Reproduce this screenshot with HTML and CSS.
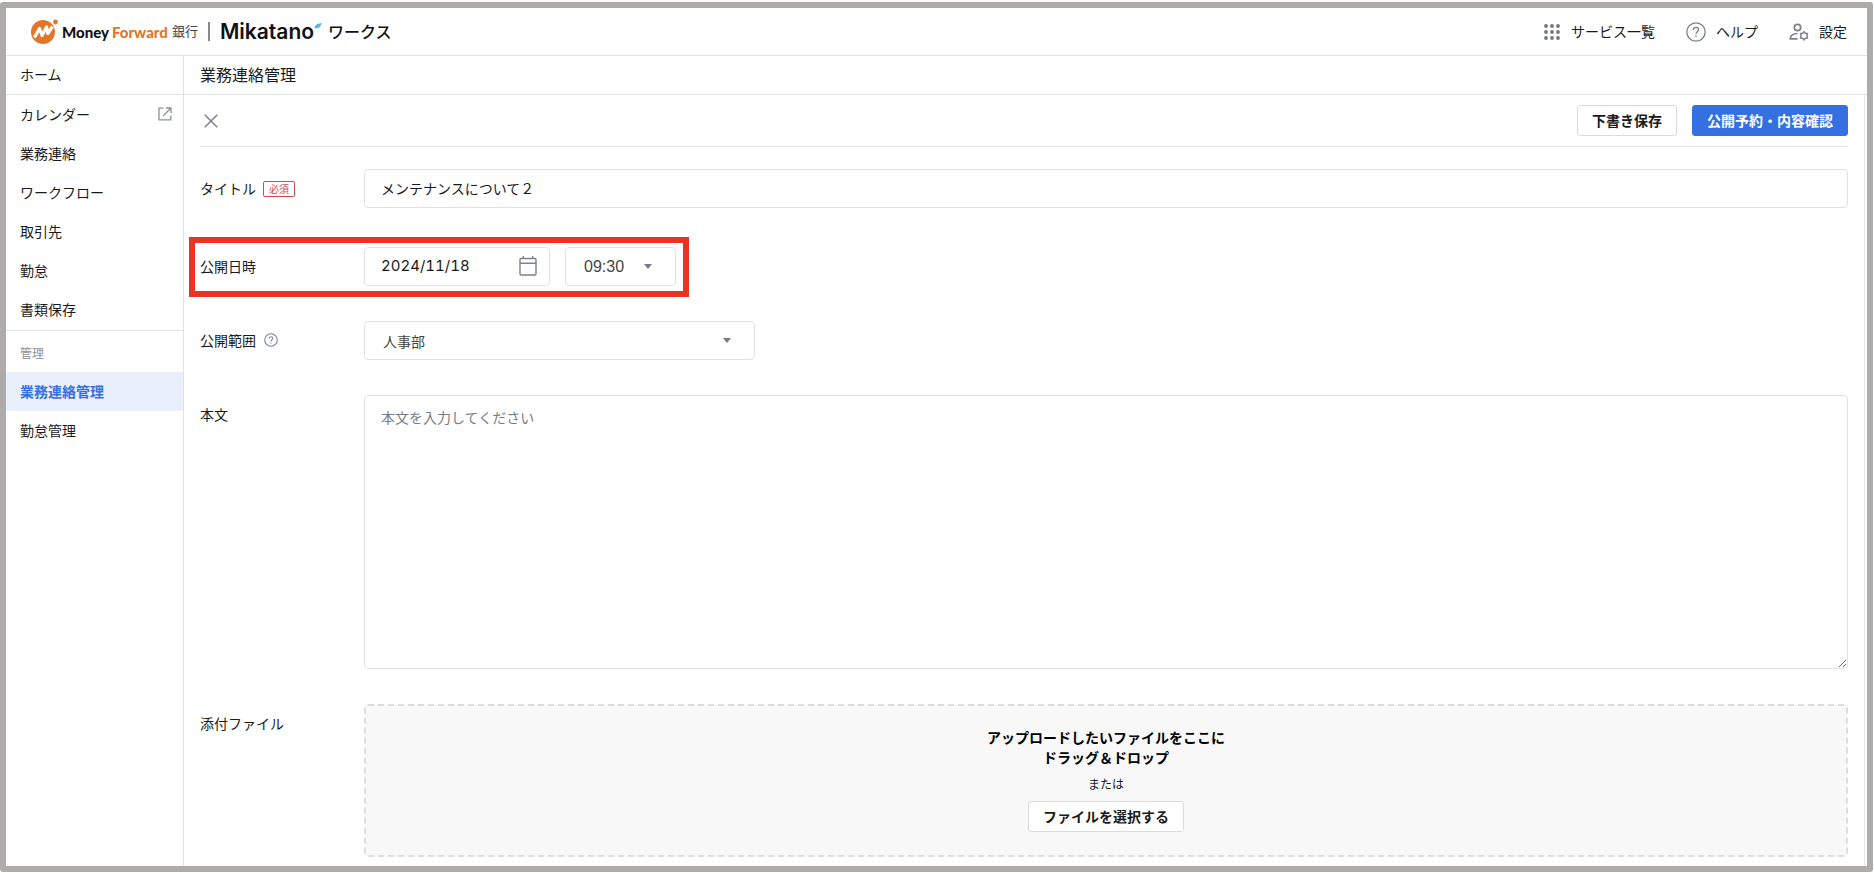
FILE: index.html
```html
<!DOCTYPE html>
<html lang="ja">

<head>
    <meta charset="UTF-8">
    <title>業務連絡管理</title>
    <link rel="stylesheet" href="styles.css">
</head>

<body>
    <div class="app">
        <header class="header">
            <a href="#" class="logo">
                <svg class="logo-mark" width="28" height="26" viewBox="0 0 28 26">
                    <circle cx="12" cy="13" r="12" fill="#e2762b" />
                    <circle cx="24.500" cy="3" r="3" fill="#fff" />
                    <circle cx="24.500" cy="3" r="2.400" fill="#e2762b" />
                    <path d="M3.500 18.500 L8.500 9.500 L11 16.500 L15.500 8 L16.800 14.500 L21.500 7.500" fill="none" stroke="#fff" stroke-width="3.200" stroke-linejoin="round" />
                </svg>
                <span class="money">Money</span>
                <span class="forward">Forward</span>
                <span class="bank">銀行</span>
                <span class="divider"></span>
                <span class="mikatano">Mikatano</span>
                <svg class="accent" width="8" height="6" viewBox="0 0 8 6">
                    <path d="M0.300 5.500 C1 2.500 3 0.300 7.800 0.300 C6.500 4 4.500 5.300 0.300 5.500Z" fill="#4db5f5" />
                </svg>
                <span class="works">ワークス</span>
            </a>
            <nav class="header-nav">
                <a href="#">
                    <svg width="18" height="18" viewBox="0 0 18 18" fill="#6f7782">
                        <circle cx="3" cy="3" r="1.900" /><circle cx="9" cy="3" r="1.900" /><circle cx="15" cy="3" r="1.900" />
                        <circle cx="3" cy="9" r="1.900" /><circle cx="9" cy="9" r="1.900" /><circle cx="15" cy="9" r="1.900" />
                        <circle cx="3" cy="15" r="1.900" /><circle cx="9" cy="15" r="1.900" /><circle cx="15" cy="15" r="1.900" />
                    </svg>
                    <span>サービス一覧</span>
                </a>
                <a href="#">
                    <svg width="20" height="20" viewBox="0 0 20 20" fill="none" stroke="#7b828e" stroke-width="1.300">
                        <circle cx="10" cy="10" r="9.200" />
                        <path d="M7.400 8 C7.400 6.200 8.500 5.400 10 5.400 C11.500 5.400 12.600 6.300 12.600 7.700 C12.600 9.500 10 9.700 10 12" />
                        <circle cx="10" cy="14.200" r="0.500" fill="#7b828e" stroke-width="0.700" />
                    </svg>
                    <span>ヘルプ</span>
                </a>
                <a href="#">
                    <svg width="20" height="18" viewBox="0 0 20 18" fill="none" stroke="#7b828e" stroke-width="1.700">
                        <circle cx="8.500" cy="4.500" r="3.200" />
                        <path d="M8.500 10.500 C4 10.500 1.300 12.500 1.300 15.800 H8.500" />
                        <path d="M15 8.800 L16.300 10.300 L18.400 10.500 L18 12.800 L18.400 15 L16.300 15.300 L15 16.900 L13.700 15.300 L11.600 15 L12 12.800 L11.600 10.500 L13.700 10.300Z" stroke-width="1.500" />
                    </svg>
                    <span>設定</span>
                </a>
            </nav>
        </header>

        <div class="content">
            <nav class="sidebar">
                <a href="#" class="home">ホーム</a>
                <a href="#">カレンダー
                    <svg width="14" height="14" viewBox="0 0 14 14" fill="none" stroke="#8b919b" stroke-width="1.300">
                        <path d="M5.500 1.200 H1 V12.800 H12.800 V8.500" />
                        <path d="M8 1 H13 V6 M13 1 L5 9" />
                    </svg>
                </a>
                <a href="#">業務連絡</a>
                <a href="#">ワークフロー</a>
                <a href="#">取引先</a>
                <a href="#">勤怠</a>
                <a href="#">書類保存</a>
                <div class="group">管理</div>
                <a href="#" class="active">業務連絡管理</a>
                <a href="#">勤怠管理</a>
            </nav>

            <main class="main">
                <h1>業務連絡管理</h1>
                <form class="panel">
                    <div class="toolbar">
                        <button type="button" class="close" aria-label="閉じる">
                            <svg width="14" height="14" viewBox="0 0 14 14" fill="none" stroke="#7b828e" stroke-width="1.500">
                                <path d="M0.700 0.700 L13.300 13.300 M13.300 0.700 L0.700 13.300" />
                            </svg>
                        </button>
                        <button type="button" class="btn">下書き保存</button>
                        <button type="button" class="btn primary">公開予約・内容確認</button>
                    </div>

                    <div class="row title-row">
                        <label for="title">タイトル<span class="required">必須</span></label>
                        <input type="text" id="title" value="メンテナンスについて２">
                    </div>

                    <div class="row date-row">
                        <label for="date">公開日時</label>
                        <div class="date">
                            <input type="text" id="date" value="2024/11/18">
                            <svg width="18" height="20" viewBox="0 0 18 20" fill="none" stroke="#7b828e" stroke-width="1.400">
                                <rect x="1" y="2.500" width="16" height="16.500" rx="1" />
                                <path d="M1 7.300 H17 M4.300 0 V2.500 M13.700 0 V2.500" />
                            </svg>
                        </div>
                        <div class="select time">
                            <select id="time" aria-label="公開時刻">
                                <option>09:30</option>
                            </select>
                        </div>
                        <div class="highlight"></div>
                    </div>

                    <div class="row">
                        <label for="range">公開範囲
                            <svg class="hint" width="14" height="14" viewBox="0 0 20 20" fill="none" stroke="#7b828e" stroke-width="1.500">
                                <circle cx="10" cy="10" r="9" />
                                <path d="M7.400 8 C7.400 6.200 8.500 5.400 10 5.400 C11.500 5.400 12.600 6.300 12.600 7.700 C12.600 9.500 10 9.700 10 12 M10 13.500 V15" />
                            </svg>
                        </label>
                        <div class="select range">
                            <select id="range">
                                <option>人事部</option>
                            </select>
                        </div>
                    </div>

                    <div class="row">
                        <label for="body">本文</label>
                        <textarea id="body" placeholder="本文を入力してください"></textarea>
                    </div>

                    <div class="row">
                        <label for="file-button">添付ファイル</label>
                        <div class="dropzone">
                            <p class="drop-text">アップロードしたいファイルをここに<br>ドラッグ＆ドロップ</p>
                            <p class="or">または</p>
                            <button type="button" id="file-button" class="btn">ファイルを選択する</button>
                        </div>
                    </div>
                </form>
            </main>
        </div>
    </div>
</body>

</html>
```
FILE: styles.css
```css
* {
    box-sizing: border-box;
}

body {
    margin: 0;
    padding: 2px 1px 2px 0;
    background-color: #fff;
    color: #1a1a1a;
    font-family: "Noto Sans CJK JP", sans-serif;
    font-size: 14px;
    line-height: 20px;
}

a {
    color: inherit;
    text-decoration: none;
}

input,
select,
textarea,
button {
    font: inherit;
    color: inherit;
}

.app {
    display: flex;
    flex-direction: column;
    min-height: calc(100vh - 4px);
    border: 6px solid #aeacab;
    border-radius: 3px;
}

/* header */
.header {
    display: flex;
    justify-content: space-between;
    align-items: center;
    height: 48px;
    padding: 0 20px 0 25px;
    border-bottom: 1px solid #dfe3e4;
}

.logo {
    display: flex;
    align-items: center;
    color: #111;
}

.money,
.forward {
    font-family: Lato, sans-serif;
    font-size: 15px;
    font-weight: 900;
}

.money {
    margin: 0 3px;
}

.forward {
    color: #e2762b;
}

.bank {
    margin-left: 4px;
    padding-bottom: 2px;
    font-size: 13px;
    color: #444;
}

.divider {
    width: 2px;
    height: 19px;
    margin: 0 10px;
    background-color: #888;
}

.mikatano {
    font-family: Inter, sans-serif;
    font-size: 21px;
    font-weight: 600;
}

.accent {
    margin-bottom: 12px;
}

.works {
    margin-left: 6px;
    padding-bottom: 2px;
    font-size: 16px;
    font-weight: 500;
}

.header-nav {
    display: flex;
    gap: 31px;
}

.header-nav a {
    display: flex;
    align-items: center;
    gap: 10px;
}

.header-nav span {
    padding-bottom: 2px;
}

/* sidebar */
.content {
    display: flex;
    flex: 1;
}

.sidebar {
    flex: 0 0 178px;
    border-right: 1px solid #dfe3e4;
}

.sidebar a {
    display: flex;
    justify-content: space-between;
    align-items: center;
    height: 39px;
    padding: 0 11px 2px 14px;
}

.sidebar .home {
    border-bottom: 1px solid #dfe3e4;
}

.sidebar .group {
    margin-top: 1px;
    padding: 12px 14px 9px;
    border-top: 1px solid #dfe3e4;
    font-size: 12px;
    color: #8b919b;
}

.sidebar .active {
    background-color: #e9effb;
    color: #3470e0;
    font-weight: 700;
}

/* main */
.main {
    flex: 1;
    min-width: 0;
}

h1 {
    height: 39px;
    margin: 0;
    padding: 0 16px;
    border-bottom: 1px solid #dfe3e4;
    font-size: 16px;
    font-weight: 400;
    line-height: 36px;
}

.panel {
    display: flex;
    flex-direction: column;
    gap: 35px;
    margin-right: 2px;
    padding: 0 16px 9px;
    border-right: 1px solid #e7eaeb;
}

.toolbar {
    display: flex;
    align-items: center;
    gap: 15px;
    height: 52px;
    margin-bottom: -13px;
    border-bottom: 1px solid #dfe3e4;
}

.close {
    display: flex;
    margin-right: auto;
    padding: 4px;
    border: 0;
    background: none;
}

.btn {
    height: 31px;
    padding: 0 14px 2px;
    border: 1px solid #d9dcde;
    border-radius: 3px;
    background-color: #fff;
    font-weight: 700;
    line-height: 20px;
}

.btn.primary {
    border-color: #3470e0;
    background-color: #3470e0;
    color: #fff;
}

.row {
    display: flex;
    align-items: flex-start;
}

.title-row {
    margin-bottom: 4px;
}

.row label {
    display: flex;
    flex: 0 0 164px;
    align-items: center;
    height: 39px;
    padding-bottom: 2px;
}

.required {
    margin: 2px 0 0 7px;
    padding: 0 5px;
    border: 1px solid #d24b4b;
    border-radius: 2px;
    color: #d24b4b;
    font-size: 10px;
    line-height: 14px;
}

.hint {
    margin-left: 8px;
}

input,
select,
textarea {
    display: block;
    width: 100%;
    height: 39px;
    padding: 0 16px 2px;
    border: 1px solid #dfe2e3;
    border-radius: 4px;
    background-color: #fff;
}

textarea {
    height: 274px;
    padding: 11px 16px;
    resize: vertical;
}

textarea::placeholder {
    color: #757c88;
}

.date-row {
    position: relative;
}

.date {
    position: relative;
    width: 186px;
    margin-right: 15px;
}

.date input {
    font-family: Inter, sans-serif;
    font-size: 15px;
    font-variant-numeric: tabular-nums;
}

.date svg {
    position: absolute;
    top: 9px;
    right: 13px;
}

.select {
    position: relative;
}

.select select {
    appearance: none;
    padding: 0 18px;
    color: #444;
}

.select::after {
    content: "";
    position: absolute;
    top: 17px;
    right: 24px;
    border: 4px solid transparent;
    border-top: 5px solid #757c88;
    border-bottom: 0;
}

.time {
    width: 111px;
}

.time select {
    font-family: "Liberation Sans", sans-serif;
    font-size: 16px;
}

.range {
    width: 391px;
}

/* frame around the date and time */
.highlight {
    position: absolute;
    top: -10px;
    left: -11px;
    width: 500px;
    height: 60px;
    border: 6px solid #ea3323;
    pointer-events: none;
}

.dropzone {
    display: flex;
    flex: 1;
    flex-direction: column;
    align-items: center;
    padding: 21px 0 23px;
    border: 2px dashed #dcdfe0;
    border-radius: 4px;
    background-color: #f8f8f8;
    text-align: center;
}

.dropzone p {
    margin: 0;
}

.drop-text {
    color: #000;
    font-weight: 700;
}

.dropzone .or {
    margin: 7px 0;
    font-size: 12px;
}
```
